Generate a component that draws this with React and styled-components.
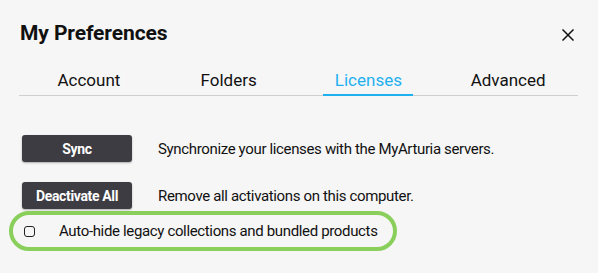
import React, { useState } from 'react';
import styled, { createGlobalStyle } from 'styled-components';

const Global = createGlobalStyle`
  html, body { margin: 0; padding: 0; background: #f6f6f6; }
  body { font-family: Roboto, 'Noto Sans', sans-serif; color: #111; }
`;

const tabs = ['Account', 'Folders', 'Licenses', 'Advanced'];

const CloseIcon = () => (
  <svg width="12" height="12" viewBox="0 0 12 12">
    <path d="M0.5 0.5L11.5 11.5M11.5 0.5L0.5 11.5" stroke="#111" strokeWidth="1.5" fill="none" />
  </svg>
);

const App = () => {
  const [active, setActive] = useState(2);
  const [hide, setHide] = useState(false);

  return (
    <>
      <Global />
      <Dialog>
        <Header>
          <Title>My Preferences</Title>
          <CloseBtn aria-label='Close'><CloseIcon /></CloseBtn>
        </Header>
        <TabBar>
          {tabs.map((t, i) => (
            <Tab key={t} $active={i === active} onClick={() => setActive(i)}>
              <span>{t}</span>
            </Tab>
          ))}
        </TabBar>
        <Body>
          <Row>
            <ActionBtn>Sync</ActionBtn>
            <Desc>Synchronize your licenses with the MyArturia servers.</Desc>
          </Row>
          <Row>
            <ActionBtn>Deactivate All</ActionBtn>
            <Desc>Remove all activations on this computer.</Desc>
          </Row>
          <Highlight>
            <CheckLabel>
              <Check type='checkbox' checked={hide} onChange={() => setHide(!hide)} />
              <span>Auto-hide legacy collections and bundled products</span>
            </CheckLabel>
          </Highlight>
        </Body>
      </Dialog>
    </>
  );
};

const Dialog = styled.div`
  width: 598px; height: 273px; box-sizing: border-box; padding: 20px 20px 0 19px;
`;

const Header = styled.div`
  display: flex; align-items: center; justify-content: space-between; height: 26px; padding-left: 1px;
`;

const Title = styled.h1`
  margin: 0; font-size: 21px; line-height: 26px; font-weight: 700; color: #111; letter-spacing: -0.1px;
`;

const CloseBtn = styled.button`
  display: flex; align-items: center; justify-content: center; background: none; border: none; padding: 0;
  margin-right: 4px; margin-top: 3px; cursor: pointer;
`;

const TabBar = styled.div`
  display: grid; grid-template-columns: repeat(4, 1fr); width: 559px; margin-top: 22px;
  border-bottom: 1px solid #cfcfcf;
`;

const Tab = styled.div`
  display: flex; justify-content: center; cursor: pointer;
  span {
    display: block; width: 90px; text-align: center; font-size: 17px; line-height: 24px; padding-bottom: 2px;
    color: ${p => (p.$active ? '#1fb0f0' : '#111')};
    border-bottom: 2px solid ${p => (p.$active ? '#1fb0f0' : 'transparent')};
    margin-bottom: -1px;
  }
`;

const Body = styled.div`
  display: flex; flex-direction: column; margin-top: 39px;
`;

const Row = styled.div`
  display: flex; align-items: center; gap: 26px; padding-left: 3px; margin-bottom: 20px;
  &:nth-child(2) { margin-bottom: 2px; }
`;

const ActionBtn = styled.button`
  width: 110px; height: 27px; border: none; border-radius: 3px; background: #3d3c42; color: #fff;
  font-family: Roboto, sans-serif; font-weight: 700; font-size: 14px; letter-spacing: -0.35px;
  box-shadow: 0 1px 2px rgba(0,0,0,0.3); cursor: pointer; padding: 0;
`;

const Desc = styled.div`
  font-size: 15px; color: #111; letter-spacing: -0.35px; white-space: nowrap;
`;

const Highlight = styled.div`
  width: 388px; height: 40px; box-sizing: border-box; margin-left: -10px;
  border: 4px solid #8acf5c; border-radius: 20px; display: flex; align-items: center; padding-left: 11px;
`;

const CheckLabel = styled.label`
  display: flex; align-items: center; gap: 24px; font-size: 15px; color: #111; cursor: pointer;
  letter-spacing: -0.35px; white-space: nowrap;
`;

const Check = styled.input`
  appearance: none; margin: 0; width: 11px; height: 11px; box-sizing: border-box; flex: none;
  border: 1.5px solid #222; border-radius: 3px; background: #f6f6f6;
  &:checked { background: #222; }
`;

export default App;
